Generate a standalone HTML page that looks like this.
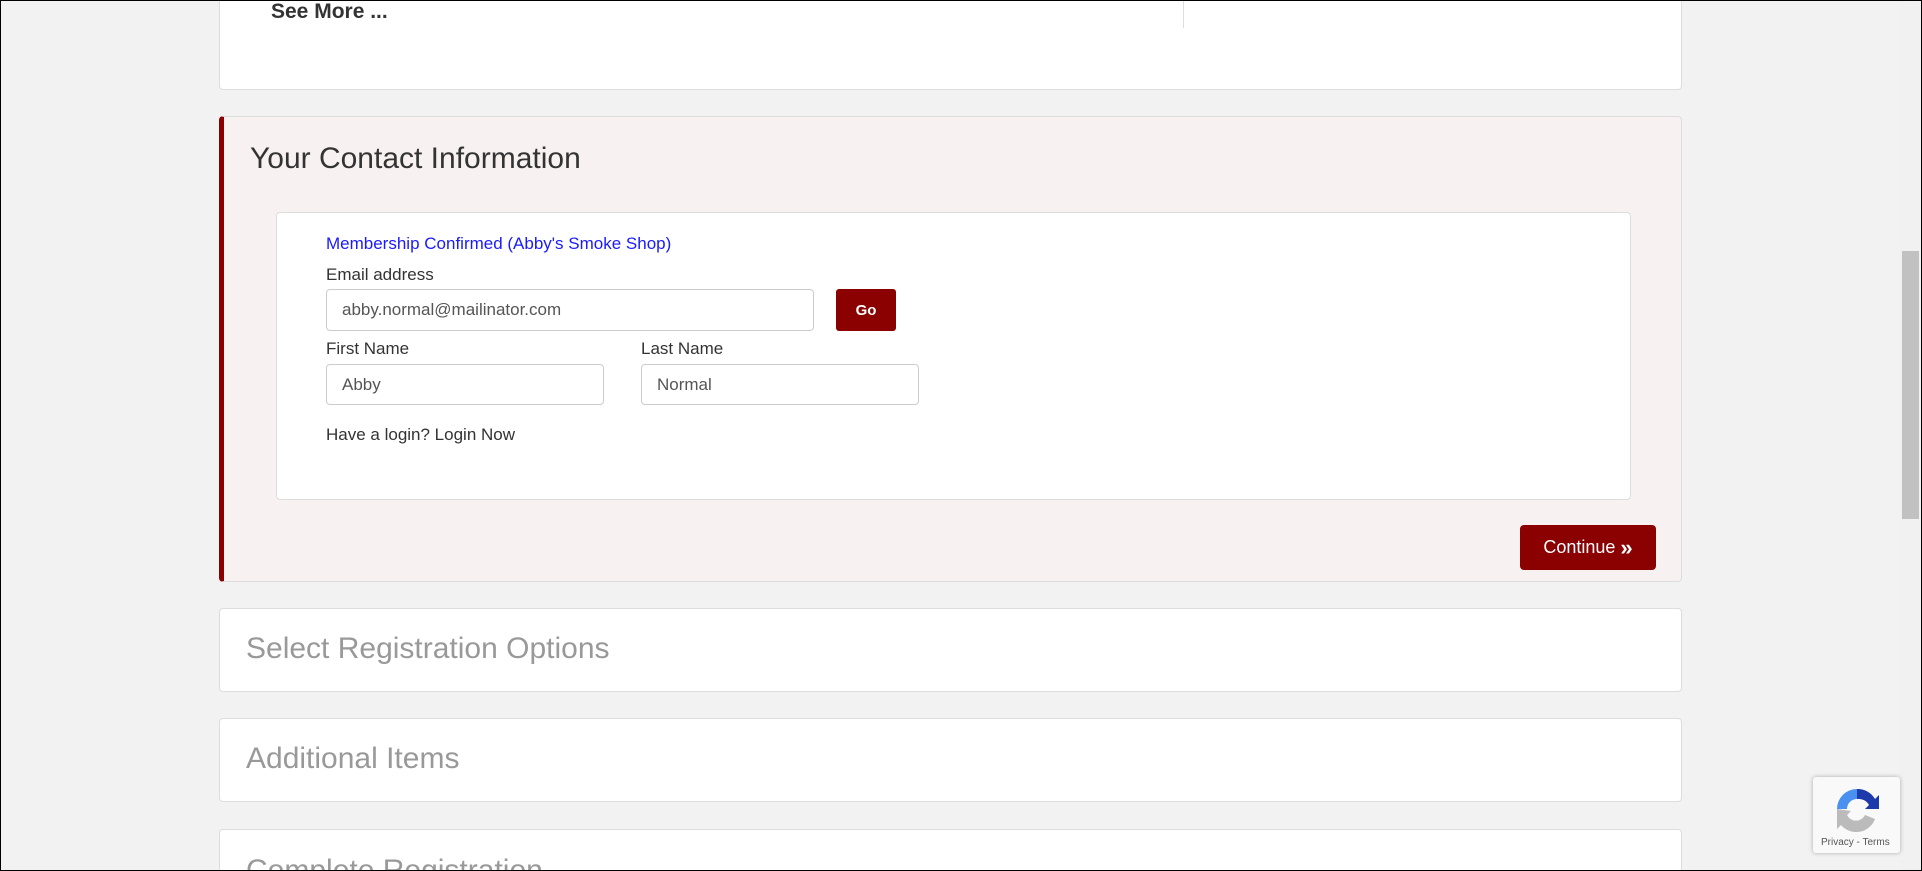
<!DOCTYPE html>
<html><head><style>
*{box-sizing:border-box;margin:0;padding:0}
html,body{width:1922px;height:871px;overflow:hidden;background:#f2f2f2}
#w{position:relative;width:1922px;height:871px;overflow:hidden;background:#f2f2f2;font-family:"Liberation Sans",Arial,sans-serif}
.abs{position:absolute}
.card{position:absolute;left:219px;width:1463px;background:#fff;border:1px solid #ddd;border-radius:4px}
.lbl{position:absolute;font-size:17px;color:#333}
.inp{position:absolute;border:1px solid #ccc;border-radius:4px;background:#fff;font-size:17px;color:#555;padding-left:15px;display:flex;align-items:center}
.sec{position:absolute;left:26px;font-size:30px;color:#999}
</style></head><body><div id="w">
<div class="card" style="top:-5px;height:95px">
  <div class="abs" style="left:51px;top:4px;font-size:21px;font-weight:bold;color:#333">See More ...</div>
  <div class="abs" style="left:963px;top:0;width:1px;height:32px;background:#ddd"></div>
</div>
<div class="card" style="top:116px;height:466px;background:#f7f1f1;border-left:5px solid #8b0000">
  <div class="abs" style="left:26px;top:25px;font-size:30px;color:#333">Your Contact Information</div>
  <div class="abs" style="left:52px;top:95px;width:1355px;height:288px;background:#fff;border:1px solid #ddd;border-radius:4px"></div>
  <div class="lbl" style="left:102px;top:117px;color:#1a1aff">Membership Confirmed (Abby's Smoke Shop)</div>
  <div class="lbl" style="left:102px;top:148px">Email address</div>
  <div class="inp" style="left:102px;top:172px;width:488px;height:42px">abby.normal@mailinator.com</div>
  <div class="abs" style="left:612px;top:172px;width:60px;height:42px;background:#8b0000;border-radius:3px;color:#fff;font-weight:bold;font-size:15px;display:flex;align-items:center;justify-content:center">Go</div>
  <div class="lbl" style="left:102px;top:222px">First Name</div>
  <div class="lbl" style="left:417px;top:222px">Last Name</div>
  <div class="inp" style="left:102px;top:247px;width:278px;height:41px">Abby</div>
  <div class="inp" style="left:417px;top:247px;width:278px;height:41px">Normal</div>
  <div class="lbl" style="left:102px;top:308px">Have a login? Login Now</div>
  <div class="abs" style="left:1296px;top:408px;width:136px;height:45px;background:#8b0000;border-radius:4px;color:#fff;font-size:18px;display:flex;align-items:center;justify-content:center">Continue <b style="margin-left:5px;font-size:22px">&#187;</b></div>
</div>
<div class="card" style="top:608px;height:84px"><div class="sec" style="top:23px">Select Registration Options</div></div>
<div class="card" style="top:718px;height:84px"><div class="sec" style="top:23px">Additional Items</div></div>
<div class="card" style="top:829px;height:60px"><div class="sec" style="top:24px">Complete Registration</div></div>
<div class="abs" style="left:1900px;top:0;width:22px;height:871px;background:#f1f1f1"></div>
<div class="abs" style="left:1902px;top:251px;width:17px;height:268px;background:#c1c1c1"></div>
<div class="abs" style="left:1813px;top:777px;width:87px;height:76px;background:#f9f9f9;box-shadow:0 0 4px #aaa;border-radius:3px">
  <svg class="abs" style="left:20px;top:8px" width="48" height="48" viewBox="0 0 48 48">
    <path d="M24 4 A20 20 0 0 0 4 24 L14 24 A10 10 0 0 1 24 14 Z" fill="#4a90f0"/>
    <path d="M24 4 A20 20 0 0 1 42 14 L46 10 L46 24 L32 24 L36 20 A12 12 0 0 0 24 14 Z" fill="#1c3aa9"/>
    <path d="M4 24 L4 44 L8 40 A20 20 0 0 0 42 34 L32 30 A10 10 0 0 1 14 30 L18 26 Z" fill="#bbb"/>
  </svg>
  <div class="abs" style="left:8px;top:60px;font-size:10px;color:#555">Privacy - Terms</div>
</div>
<div class="abs" style="left:0;top:0;width:1922px;height:871px;border:1px solid #000;pointer-events:none"></div>
</div></body></html>
